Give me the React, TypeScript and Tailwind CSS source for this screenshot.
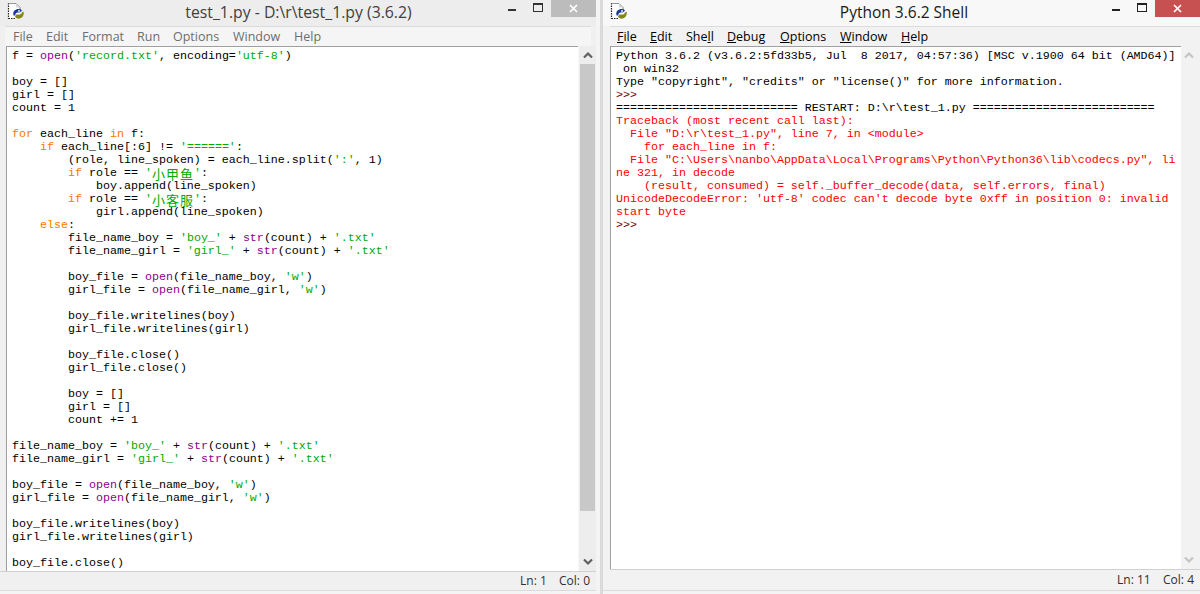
import React from "react";

const K = ({ children }: { children: React.ReactNode }) => <span className="text-[#ff7700]">{children}</span>;
const S = ({ children }: { children: React.ReactNode }) => <span className="text-[#00aa00]">{children}</span>;
const B = ({ children }: { children: React.ReactNode }) => <span className="text-[#900090]">{children}</span>;
const C = ({ children }: { children: React.ReactNode }) => (
  <span className="inline-block h-[13px] align-top text-[13px] tracking-[1px] leading-[13px] font-['Noto_Sans_CJK_SC',sans-serif]">{children}</span>
);

const L = ({ children, className = "" }: { children?: React.ReactNode; className?: string }) => (
  <div className={`h-[13px] leading-[13px] whitespace-pre ${className}`}>{children}</div>
);

const code: React.ReactNode[] = [
  <>f = <B>open</B>(<S>'record.txt'</S>, encoding=<S>'utf-8'</S>)</>,
  "",
  "boy = []",
  "girl = []",
  "count = 1",
  "",
  <><K>for</K> each_line <K>in</K> f:</>,
  <>    <K>if</K> each_line[:6] != <S>'======'</S>:</>,
  <>        (role, line_spoken) = each_line.split(<S>':'</S>, 1)</>,
  <>        <K>if</K> role == <S>'<C>小甲鱼</C>'</S>:</>,
  "            boy.append(line_spoken)",
  <>        <K>if</K> role == <S>'<C>小客服</C>'</S>:</>,
  "            girl.append(line_spoken)",
  <>    <K>else</K>:</>,
  <>        file_name_boy = <S>'boy_'</S> + <B>str</B>(count) + <S>'.txt'</S></>,
  <>        file_name_girl = <S>'girl_'</S> + <B>str</B>(count) + <S>'.txt'</S></>,
  "",
  <>        boy_file = <B>open</B>(file_name_boy, <S>'w'</S>)</>,
  <>        girl_file = <B>open</B>(file_name_girl, <S>'w'</S>)</>,
  "",
  "        boy_file.writelines(boy)",
  "        girl_file.writelines(girl)",
  "",
  "        boy_file.close()",
  "        girl_file.close()",
  "",
  "        boy = []",
  "        girl = []",
  "        count += 1",
  "",
  <>file_name_boy = <S>'boy_'</S> + <B>str</B>(count) + <S>'.txt'</S></>,
  <>file_name_girl = <S>'girl_'</S> + <B>str</B>(count) + <S>'.txt'</S></>,
  "",
  <>boy_file = <B>open</B>(file_name_boy, <S>'w'</S>)</>,
  <>girl_file = <B>open</B>(file_name_girl, <S>'w'</S>)</>,
  "",
  "boy_file.writelines(boy)",
  "girl_file.writelines(girl)",
  "",
  "boy_file.close()",
];

const shell: [string, string][] = [
  ["Python 3.6.2 (v3.6.2:5fd33b5, Jul  8 2017, 04:57:36) [MSC v.1900 64 bit (AMD64)]", "text-black"],
  [" on win32", "text-black"],
  ['Type "copyright", "credits" or "license()" for more information.', "text-black"],
  [">>> ", "text-[#770000]"],
  ["========================== RESTART: D:\\r\\test_1.py ==========================", "text-black"],
  ["Traceback (most recent call last):", "text-[#ff0000]"],
  ['  File "D:\\r\\test_1.py", line 7, in <module>', "text-[#ff0000]"],
  ["    for each_line in f:", "text-[#ff0000]"],
  ['  File "C:\\Users\\nanbo\\AppData\\Local\\Programs\\Python\\Python36\\lib\\codecs.py", li', "text-[#ff0000]"],
  ["ne 321, in decode", "text-[#ff0000]"],
  ["    (result, consumed) = self._buffer_decode(data, self.errors, final)", "text-[#ff0000]"],
  ["UnicodeDecodeError: 'utf-8' codec can't decode byte 0xff in position 0: invalid", "text-[#ff0000]"],
  ["start byte", "text-[#ff0000]"],
  [">>> ", "text-[#770000]"],
];

const PyIcon = () => (
  <svg width="18" height="18" viewBox="0 0 18 18" className="shrink-0">
    <path d="M1.500 1.500H9L13 5.500V16.500H1.500Z" fill="#fff" />
    <path d="M1.500 1V17" stroke="#222" strokeWidth="1.200" strokeDasharray="1.500 1" />
    <path d="M1.500 16.500H8" stroke="#222" strokeWidth="1.200" strokeDasharray="1.500 1" />
    <path d="M1.500 1.500H9" stroke="#999" strokeWidth="1" />
    <path d="M9 1.500L13 5.500V8" fill="none" stroke="#777" strokeWidth="1" />
    <path d="M9 1.500V5.500H13" fill="#d8d8d8" />
    <path d="M7 14c-1.200-1.800-1-4 .5-5.500C9 7 12 6.300 14 7.500l1 1.200-2.500 1.800H10.500c-1.200 0-2 .8-2 2Z" fill="#17379a" />
    <path d="M16.500 9.500c.8 2.300 0 5-2.500 6.500-2 1-4.200.8-5.500-.5l-.5-1.500 1.500-1.500H13c1 0 1.500-1 2-2Z" fill="#85851a" />
    <circle cx="12" cy="9" r=".9" fill="#fff" />
  </svg>
);

const Chevron = ({ up, color }: { up?: boolean; color: string }) => (
  <svg width="10" height="8" viewBox="0 0 10 8">
    <path d={up ? "M1 6.500L5 2.500L9 6.500" : "M1 1.500L5 5.500L9 1.500"} fill="none" stroke={color} strokeWidth="2.200" />
  </svg>
);

function WinButtons({ closeClass, glyph }: { closeClass: string; glyph: string }) {
  return (
    <div className="flex items-start shrink-0">
      <div className="w-[26px] h-[16px] flex items-center justify-center">
        <div className="w-[8px] h-[2px] mt-[4px]" style={{ background: glyph }} />
      </div>
      <div className="w-[26px] h-[16px] flex items-start justify-center pt-[3px]">
        <div className="w-[10px] h-[9px] border border-t-2" style={{ borderColor: glyph }} />
      </div>
      <div className={`w-[45px] h-[17px] flex items-center justify-center ${closeClass}`}>
        <svg width="9" height="9" viewBox="0 0 9 9">
          <path d="M1 1L8 8M8 1L1 8" stroke="#fff" strokeWidth="1.700" />
        </svg>
      </div>
    </div>
  );
}

export default function App() {
  return (
    <div className="w-[1200px] h-[594px] flex bg-[#f4f4f4] overflow-hidden font-['Liberation_Mono',monospace] text-[11.67px] text-black">
      {/* Left window */}
      <div className="w-[596px] h-[591px] flex flex-col bg-[#f0f0f0] shrink-0 font-['Liberation_Mono','Noto_Sans_CJK_SC',monospace] border-b border-[#dcdcdc]">
        <div className="h-[26px] flex shrink-0 bg-[#ededed]">
          <div className="pl-[7px] pt-[2px]"><PyIcon /></div>
          <div className="flex-1 text-center pl-[73px] font-['Open_Sans',sans-serif] text-[15.8px] leading-[24px] text-[#404040]">
            test_1.py - D:\r\test_1.py (3.6.2)
          </div>
          <WinButtons closeClass="bg-[#bcbcbc]" glyph="#333" />
        </div>
        <div className="h-[20px] mx-[5px] bg-[#f5f5f5] border-t border-[#dcdcdc] flex shrink-0 font-['Open_Sans',sans-serif] text-[12.5px] leading-[20px] text-[#6d6d6d]">
          <span className="ml-[8px] w-[33px]">File</span>
          <span className="w-[36px]">Edit</span>
          <span className="w-[55px]">Format</span>
          <span className="w-[36px]">Run</span>
          <span className="w-[60px]">Options</span>
          <span className="w-[61px]">Window</span>
          <span>Help</span>
        </div>
        <div className="flex flex-1 min-h-0 ml-[6px]">
          <div className="flex-1 min-w-0 bg-white border-l border-t border-[#a0a0a0] pl-[5px] pt-[3px] overflow-hidden h-[525px]">
            {code.map((c, i) => <L key={i}>{c}</L>)}
          </div>
          <div className="w-[18px] h-[525px] bg-[#ededed] border-l border-[#f8f8f8] flex flex-col items-center shrink-0">
            <div className="h-[18px] flex items-center justify-center shrink-0"><Chevron up color="#606060" /></div>
            <div className="w-[15px] h-[447px] bg-[#c8c8c8] shrink-0" />
            <div className="flex-1 flex items-end pb-[5px]"><Chevron color="#606060" /></div>
          </div>
        </div>
        <div className="h-[19px] border-t border-[#d0d0d0] flex justify-end items-center shrink-0 pr-[6px] font-['Open_Sans',sans-serif] text-[12px] text-[#303030] bg-[#f0f0f0]">
          <span className="w-[39px]">Ln: 1</span>
          <span>Col: 0</span>
        </div>
      </div>

      <div className="w-[7px] shrink-0 border-r-[3px] border-[#dadada]" />

      {/* Right window */}
      <div className="flex-1 min-w-0 h-[591px] flex flex-col bg-[#f2f2f2] border-b border-[#dcdcdc]">
        <div className="h-[26px] flex shrink-0 bg-[#f8f8f8]">
          <div className="pl-[7px] pt-[2px]"><PyIcon /></div>
          <div className="flex-1 text-center pl-[77px] font-['Open_Sans',sans-serif] text-[15.5px] leading-[24px] text-[#1a1a1a]">
            Python 3.6.2 Shell
          </div>
          <WinButtons closeClass="bg-[#c75050]" glyph="#222" />
        </div>
        <div className="h-[20px] ml-[7px] pl-[7px] border-t border-[#dcdcdc] flex shrink-0 font-['Open_Sans',sans-serif] text-[12.5px] leading-[20px] text-black">
          <span className="w-[33px]"><u>F</u>ile</span>
          <span className="w-[36px]"><u>E</u>dit</span>
          <span className="w-[41px]">She<u>l</u>l</span>
          <span className="w-[53px]"><u>D</u>ebug</span>
          <span className="w-[60px]"><u>O</u>ptions</span>
          <span className="w-[61px]"><u>W</u>indow</span>
          <span><u>H</u>elp</span>
        </div>
        <div className="flex flex-1 min-h-0 ml-[7px]">
          <div className="flex-1 min-w-0 bg-white border-l border-t border-[#a0a0a0] pl-[5px] pt-[3px] overflow-hidden h-[523px]">
            {shell.map(([t, c], i) => <L key={i} className={c}>{t}</L>)}
          </div>
          <div className="w-[19px] h-[523px] flex flex-col items-center justify-between shrink-0 pr-[3px]">
            <div className="h-[18px] flex items-center justify-center"><Chevron up color="#c4c4c4" /></div>
            <div className="pb-[5px]"><Chevron color="#c4c4c4" /></div>
          </div>
        </div>
        <div className="h-[21px] ml-[7px] border-t border-[#d0d0d0] flex justify-end items-center shrink-0 pr-[6px] font-['Open_Sans',sans-serif] text-[12px] text-[#303030]">
          <span className="w-[46px]">Ln: 11</span>
          <span>Col: 4</span>
        </div>
      </div>
    </div>
  );
}
